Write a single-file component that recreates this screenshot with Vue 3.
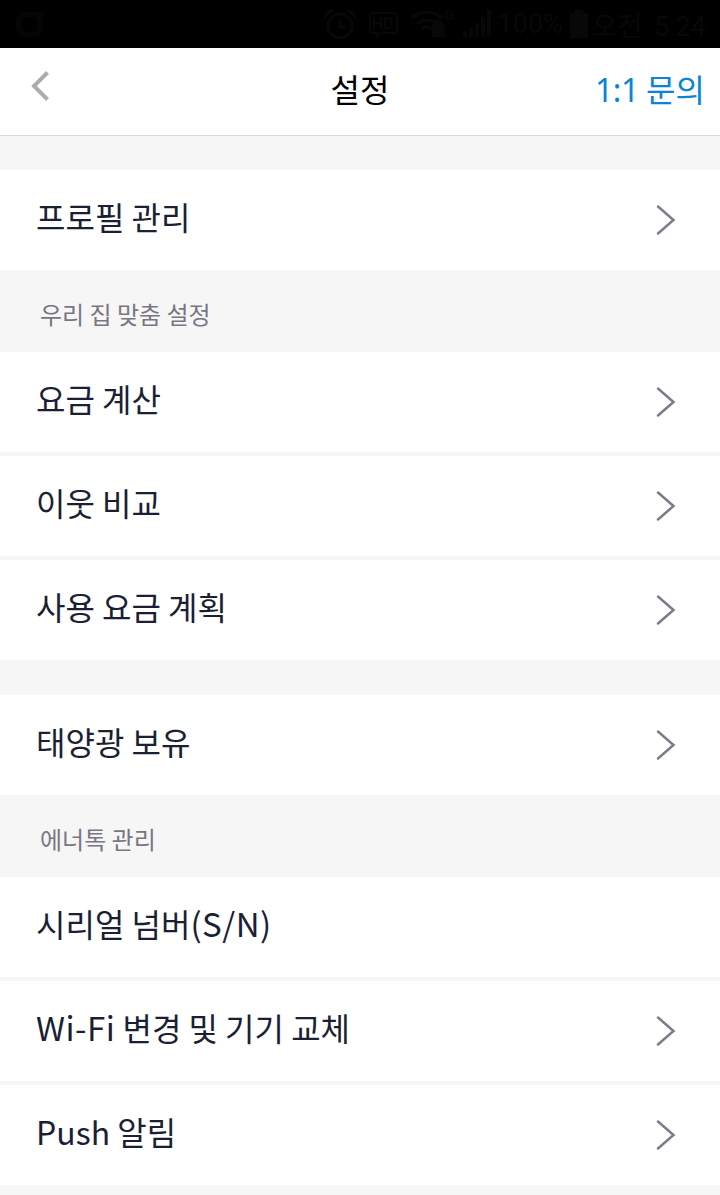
<script setup>
import { ref } from 'vue'

const groups = ref([
    { title: '', items: [{ label: '프로필 관리', arrow: true }] },
    {
        title: '우리 집 맞춤 설정',
        items: [
            { label: '요금 계산', arrow: true },
            { label: '이웃 비교', arrow: true },
            { label: '사용 요금 계획', arrow: true }
        ]
    },
    { title: '', items: [{ label: '태양광 보유', arrow: true }] },
    {
        title: '에너톡 관리',
        items: [
            { label: '시리얼 넘버(S/N)', arrow: false },
            { label: 'Wi-Fi 변경 및 기기 교체', arrow: true },
            { label: 'Push 알림', arrow: true }
        ]
    }
])

// latin abbreviations get a little more room than the hangul
const split = (label) => label.split(/(\(S\/N\)|Wi-Fi)/).filter(Boolean)
const isWide = (part) => part === '(S/N)' || part === 'Wi-Fi'
</script>

<template>
    <div class="screen">
        <div class="status">
            <svg class="app-icon" width="28" height="26" viewBox="0 0 28 26">
                <path d="M28 0v5h-1v11q0 10-10 10h-7Q0 26 0 16v-6Q0 1 10 1h13q3 0 5-1zM11 6q-5 0-5 5v5q0 5 5 5h5q5 0 5-5V6z" fill="#050505" fill-rule="evenodd" />
            </svg>
            <!-- alarm, HD, wifi, signal -->
            <svg class="status-icons" width="168" height="30" viewBox="0 0 168 30" fill="none" stroke="#080808" stroke-width="3">
                <circle cx="16" cy="17" r="12" />
                <path d="M16 10v8h5M1 8q2-5 8-6M23 2q6 1 8 6" />
                <path d="M48 4h22q3 0 3 3v14q0 3-3 3H57l-4 4v-4h-5q-2 0-2-3V7q0-3 2-3z" stroke-width="2" />
                <path d="M50 8v12M50 14h7M57 8v12M61 9v10h3q4 0 4-5t-4-5z" stroke-width="2" />
                <path d="M88 9q15-12 30 0M93 15q10-8 20 0M98 20q5-4 10 0" />
                <path d="M109 17h11v10h-11zM111 17v-3q3-6 6 0v3" fill="#080808" stroke-width="2" />
                <path d="M128 3q-6-3-6 3t6 3V6h-3" stroke-width="1.5" />
                <path d="M141 22v6M147 19v9M153 14v14M159 8v20M165 1v27" stroke-width="4" />
            </svg>
            <span class="battery-text">100%</span>
            <svg class="battery" width="18" height="28" viewBox="0 0 18 28">
                <path d="M5 0h8v3h5v25H0V3h5z" fill="#080808" />
            </svg>
            <span class="clock">오전 5:24</span>
        </div>

        <header class="top">
            <svg class="back" width="20" height="32" viewBox="0 0 20 32">
                <path d="M16.5 2.5L3 16l13.5 13.5" fill="none" stroke="#adadad" stroke-width="4" />
            </svg>
            <h1>설정</h1>
            <a class="ask"><span>1:1</span> 문의</a>
        </header>

        <section v-for="(group, i) in groups" :key="i" class="group">
            <h2 :class="{ blank: !group.title }">{{ group.title }}</h2>
            <ul>
                <li v-for="item in group.items" :key="item.label">
                    <span class="label"><span v-for="part in split(item.label)" :key="part" :class="{ wide: isWide(part) }">{{ part }}</span></span>
                    <svg v-if="item.arrow" width="20" height="32" viewBox="0 0 20 32">
                        <path d="M2 2.5L17.5 16L2 29.5" fill="none" stroke="#7c7c89" stroke-width="2.5" stroke-linecap="round" />
                    </svg>
                </li>
            </ul>
        </section>
    </div>
</template>

<style>
body {
    background: #f6f6f6;
}
</style>

<style scoped>
.screen {
    height: 1195px;
    overflow: hidden;
    background: #f6f6f6;
    font-family: "Noto Sans CJK KR", sans-serif;
}

.status {
    box-sizing: border-box;
    height: 48px;
    display: flex;
    align-items: center;
    padding: 0 14px 0 16px;
    background: #000;
    color: #080808;
    font-family: Roboto, "Noto Sans CJK KR", sans-serif;
    font-size: 27px;
}
.status-icons {
    margin-left: auto;
}
.battery-text {
    margin-left: 6px;
    width: 64px;
}
.battery {
    margin: 0 5px 0 8px;
}
.clock {
    word-spacing: 5px;
}

.top {
    box-sizing: border-box;
    height: 88px;
    display: grid;
    grid-template-columns: 1fr auto 1fr;
    align-items: center;
    padding: 0 15px 8px;
    border-bottom: 1px solid #dcdcdc;
    background: #fff;
}
.back {
    margin: -3px 0 0 16px;
}
.top h1 {
    margin: 0;
    font-size: 32px;
    font-weight: 400;
    line-height: 48px;
    color: #000;
}
.ask {
    justify-self: end;
    font-size: 32px;
    line-height: 48px;
    color: #0a84d8;
}
.ask span {
    font-family: "Noto Sans", sans-serif;
    line-height: 1;
    letter-spacing: -0.4px;
}

h2 {
    box-sizing: border-box;
    height: 81.7px;
    margin: 0;
    padding: 8px 40px 0;
    font-size: 24px;
    font-weight: 400;
    line-height: 72px;
    color: #777783;
}
h2.blank {
    height: 35.5px;
}
.group:nth-of-type(1) h2.blank {
    height: 34px;
}

ul {
    margin: 0;
    padding: 0;
    list-style: none;
    display: flex;
    flex-direction: column;
    gap: 4px;
}
li {
    box-sizing: border-box;
    height: 100px;
    display: flex;
    align-items: center;
    justify-content: space-between;
    padding: 0 44px 0 36px;
    background: #fff;
    font-size: 32px;
    color: #1b1f34;
}
.label {
    margin-top: -8px;
    line-height: 48px;
    white-space: pre;
}
.wide {
    font-size: 33px;
    line-height: 1;
    letter-spacing: 0.5px;
}
</style>
